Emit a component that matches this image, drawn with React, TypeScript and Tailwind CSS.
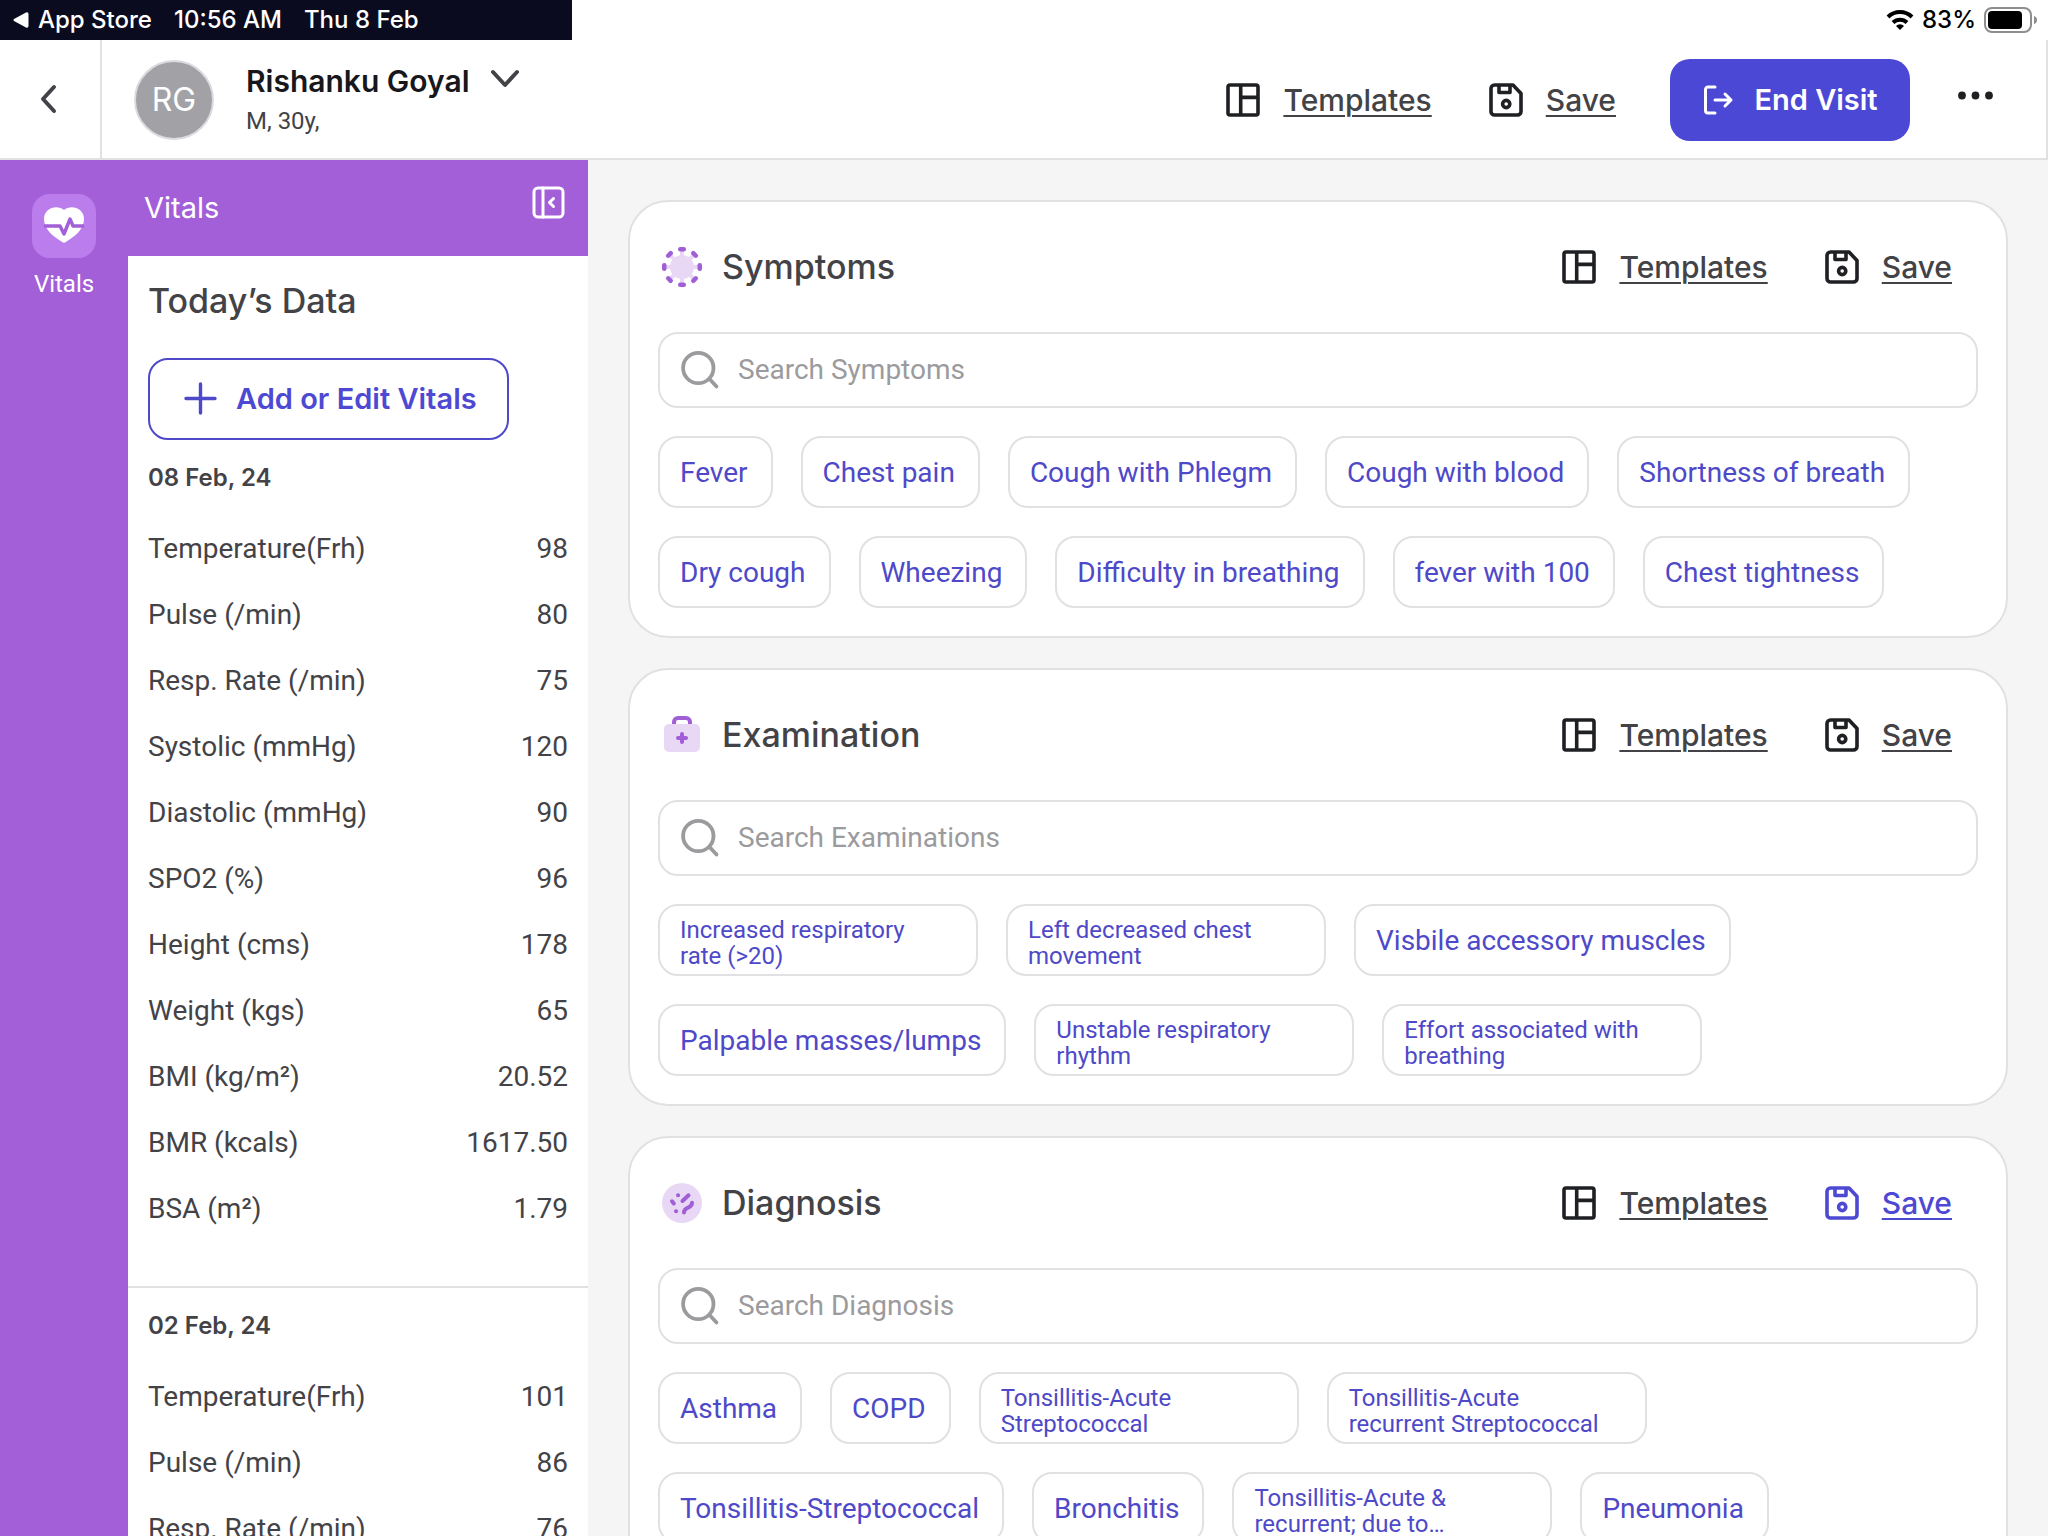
import React from "react";

function TemplatesIcon() {
  return (
    <svg width="40" height="40" viewBox="0 0 40 40" fill="none" stroke="#1f2023" strokeWidth="3.6" strokeLinejoin="round" aria-hidden="true">
      <rect x="5" y="5" width="30" height="30" rx="2" />
      <path d="M17.700 5v30M17.700 17.400h17.300" />
    </svg>
  );
}

function SaveIcon() {
  return (
    <svg width="40" height="40" viewBox="0 0 40 40" fill="none" stroke="currentColor" strokeWidth="3.6" strokeLinejoin="round" aria-hidden="true">
      <path d="M8.500 5h18.500l8 8.500V31.500a3.500 3.500 0 0 1-3.500 3.500H8.500A3.500 3.500 0 0 1 5 31.500V8.500A3.500 3.500 0 0 1 8.500 5Z" />
      <path d="M13 5v7.500h11V5" />
      <circle cx="20.200" cy="24" r="3.600" />
    </svg>
  );
}

function SearchIcon() {
  return (
    <svg width="40" height="40" viewBox="0 0 40 40" fill="none" stroke="#9b9b9e" strokeWidth="3.8" strokeLinecap="round" aria-hidden="true">
      <circle cx="18.300" cy="18" r="15.200" />
      <path d="M30 29.500l6.500 7" />
    </svg>
  );
}

function SymptomsIcon() {
  const angles = [0, 45, 90, 135, 180, 225, 270, 315];
  return (
    <svg width="48" height="48" viewBox="0 0 48 48" aria-hidden="true">
      <circle cx="24" cy="24" r="12" fill="#e8d8f5" />
      {angles.map((a) => (
        <g key={a} transform={`rotate(${a} 24 24)`}>
          <rect x="22" y="6" width="4" height="8" fill="#e8d8f5" />
          <rect x="20" y="4" width="8" height="4.500" rx="2.200" fill="#a05fd6" />
        </g>
      ))}
    </svg>
  );
}

function ExaminationIcon() {
  return (
    <svg width="48" height="48" viewBox="0 0 48 48" fill="none" aria-hidden="true">
      <path d="M16 15v-4a4 4 0 0 1 4-4h8a4 4 0 0 1 4 4v4" stroke="#a05fd6" strokeWidth="4" />
      <rect x="6" y="13" width="36" height="28" rx="5" fill="#e8d8f5" />
      <path d="M24 23v8M20 27h8" stroke="#a05fd6" strokeWidth="4" strokeLinecap="round" />
    </svg>
  );
}

function DiagnosisIcon() {
  return (
    <svg width="48" height="48" viewBox="0 0 48 48" fill="none" aria-hidden="true">
      <circle cx="24" cy="24" r="20" fill="#e8d8f5" />
      <g stroke="#a05fd6" strokeWidth="4" strokeLinecap="round">
        <path d="M24.500 22l6-5.700" />
        <path d="M14 22.300l1.800 2.200" />
        <path d="M20 16.300h.1M18 32.300h.1" />
        <path d="M26 33.500c0-7 8-3 8-9.800" />
      </g>
    </svg>
  );
}

function TemplatesAndSave({ active = false }: { active?: boolean }) {
  return (
    <div className="flex items-center gap-[54px] text-[30px] leading-10 font-medium">
      <button className="flex items-center gap-5 text-[#434347]">
        <TemplatesIcon />
        <span className="underline decoration-2 underline-offset-4">Templates</span>
      </button>
      <button className={active ? "flex items-center gap-5 text-[#4e49d2]" : "flex items-center gap-5 text-[#1f2023]"}>
        <SaveIcon />
        <span className={active ? "underline decoration-2 underline-offset-4" : "text-[#434347] underline decoration-2 underline-offset-4"}>Save</span>
      </button>
    </div>
  );
}

type Chip = string | { wrap: string };

function Section({ title, icon, placeholder, rows, active }: { title: string; icon: React.ReactNode; placeholder: string; rows: Chip[][]; active?: boolean }) {
  return (
    <section className="shrink-0 rounded-[40px] border-2 border-[#e1e1e3] bg-white p-7 pt-0 font-[Inter,sans-serif]">
      <div className="flex h-[130px] items-center justify-between pr-[26px]">
        <h2 className="flex items-center gap-4 text-[34px] leading-10 font-medium text-[#434347]">
          {icon}
          {title}
        </h2>
        <TemplatesAndSave active={active} />
      </div>
      <label className="flex h-[76px] items-center gap-[18px] rounded-[20px] border-2 border-[#e1e1e3] px-5">
        <SearchIcon />
        <input
          type="text"
          aria-label={placeholder}
          placeholder={placeholder}
          className="flex-1 bg-transparent font-[Roboto,sans-serif] text-[28px] text-[#434347] outline-none placeholder:text-[#9b9b9e]"
        />
      </label>
      {rows.map((row, i) => (
        <div key={i} className="mt-7 flex gap-7 font-[Roboto,sans-serif] text-[#4e49c8]">
          {row.map((chip) =>
            typeof chip === "string" ? (
              <button key={chip} className="h-[72px] rounded-[20px] border-2 border-[#e1e1e3] pt-0.5 pr-[23px] pl-5 text-[28px] whitespace-nowrap">
                {chip}
              </button>
            ) : (
              <button key={chip.wrap} className="flex h-[72px] w-80 items-center rounded-[20px] border-2 border-[#e1e1e3] px-5 pt-1.5 text-left text-2xl leading-[26px]">
                <span className="whitespace-pre-line">{chip.wrap}</span>
              </button>
            ),
          )}
        </div>
      ))}
    </section>
  );
}

function Readings({ date, rows }: { date: string; rows: [string, string][] }) {
  return (
    <table className="w-full text-[28px]">
      <caption className="pb-5 text-left font-[Inter,sans-serif] text-2xl leading-9 font-semibold text-[#434347]">{date}</caption>
      <tbody>
        {rows.map(([name, value]) => (
          <tr key={name} className="h-[66px]">
            <th scope="row" className="text-left font-normal">{name}</th>
            <td className="text-right">{value}</td>
          </tr>
        ))}
      </tbody>
    </table>
  );
}

const today: [string, string][] = [
  ["Temperature(Frh)", "98"],
  ["Pulse (/min)", "80"],
  ["Resp. Rate (/min)", "75"],
  ["Systolic (mmHg)", "120"],
  ["Diastolic (mmHg)", "90"],
  ["SPO2 (%)", "96"],
  ["Height (cms)", "178"],
  ["Weight (kgs)", "65"],
  ["BMI (kg/m²)", "20.52"],
  ["BMR (kcals)", "1617.50"],
  ["BSA (m²)", "1.79"],
];

const previous: [string, string][] = [
  ["Temperature(Frh)", "101"],
  ["Pulse (/min)", "86"],
  ["Resp. Rate (/min)", "76"],
];

export default function App() {
  return (
    <div className="flex h-screen flex-col overflow-hidden bg-[#f5f5f5] font-[Roboto,sans-serif]">
      <div className="flex h-10 shrink-0 items-center justify-between bg-white pr-2.5 font-[Inter,sans-serif] text-2xl leading-10 font-medium">
        <div className="flex h-10 w-[572px] items-center bg-[#0b0b20] pl-3 text-white">
          <svg width="18" height="18" viewBox="0 0 18 18" fill="#fff" aria-hidden="true">
            <path d="M2 8 14 1.500Q16.500.8 16.500 3v12q0 2.200-2.500 1.500L2 10Q.8 9 2 8Z" />
          </svg>
          <span className="ml-2">App Store</span>
          <span className="ml-[22px]">10:56 AM</span>
          <span className="ml-[22px]">Thu 8 Feb</span>
        </div>
        <div className="flex items-center text-black">
          <svg width="28" height="24" viewBox="0 0 28 24" fill="none" stroke="#000" strokeWidth="4" aria-hidden="true">
            <path d="M2 9a17 17 0 0 1 24 0M7 14.500a10 10 0 0 1 14 0" />
            <path d="M14 22l-4-4a5.500 5.500 0 0 1 8 0Z" fill="#000" stroke="none" />
          </svg>
          <span className="mx-2">83%</span>
          <svg width="54" height="26" viewBox="0 0 54 26" aria-hidden="true">
            <rect x="1" y="1" width="46" height="24" rx="7" fill="none" stroke="#8e8e8e" strokeWidth="2" />
            <rect x="4" y="4" width="34" height="18" rx="4" />
            <path d="M50 9q3 1 3 4t-3 4Z" fill="#8e8e8e" />
          </svg>
        </div>
      </div>

      <header className="flex h-[120px] shrink-0 items-center border-r-2 border-b-2 border-[#e1e1e3] bg-white font-[Inter,sans-serif]">
        <button aria-label="Back" className="flex h-full w-[102px] items-center justify-center border-r-2 border-[#e1e1e3]">
          <svg width="32" height="32" viewBox="0 0 32 32" fill="none" stroke="#434347" strokeWidth="4" strokeLinecap="round" strokeLinejoin="round" aria-hidden="true">
            <path d="M20 4 9 16 20 28" />
          </svg>
        </button>
        <div className="flex flex-1 items-center pt-0.5">
          <div className="ml-8 flex size-20 items-center justify-center rounded-full border-2 border-[#dcdce0] bg-[#a1a1a6] text-[32px] text-white">RG</div>
          <div className="ml-8 flex-1 pt-0.5">
            <button className="flex items-center gap-5 text-[30px] leading-10 font-semibold text-[#17171c]">
              Rishanku Goyal
              <svg width="30" height="24" viewBox="0 0 30 24" fill="none" stroke="#434347" strokeWidth="4" strokeLinecap="round" strokeLinejoin="round" aria-hidden="true">
                <path d="M3 3l12 13L27 3" />
              </svg>
            </button>
            <div className="font-[Roboto,sans-serif] text-2xl leading-10 text-[#434347]">M, 30y,</div>
          </div>
          <TemplatesAndSave />
          <button className="ml-[54px] flex h-[82px] w-60 items-center justify-center gap-5 rounded-[20px] bg-[#4b48d6] text-[29px] font-semibold text-white">
            <svg width="32" height="32" viewBox="0 0 32 32" fill="none" stroke="#fff" strokeWidth="3" strokeLinecap="round" strokeLinejoin="round" aria-hidden="true">
              <path d="M13 3H6a2.500 2.500 0 0 0-2.500 2.500v21A2.500 2.500 0 0 0 6 29h7M13 16h16M23 10l6 6-6 6" />
            </svg>
            End Visit
          </button>
          <button aria-label="More options" className="mr-[52px] ml-12">
            <svg width="36" height="18" viewBox="0 0 36 18" fill="#1f2023" aria-hidden="true">
              <circle cx="4" cy="4.500" r="3.900" />
              <circle cx="17.500" cy="4.500" r="3.900" />
              <circle cx="31" cy="4.500" r="3.900" />
            </svg>
          </button>
        </div>
      </header>

      <div className="flex min-h-0 flex-1">
        <nav className="w-32 shrink-0 bg-[#a35fd8] pt-[34px]">
          <button className="flex w-full flex-col items-center gap-2 text-2xl leading-9 text-white">
            <span className="flex size-16 items-center justify-center rounded-[18px] bg-[#bb7dec]">
              <svg width="44" height="40" viewBox="0 0 44 40" aria-hidden="true">
                <path d="M22 37C12 31 2 24 2 13 2 2 15-2 22 4c7-6 20-2 20 9 0 11-10 18-20 24Z" fill="#fff" />
                <path d="M2 20h16l4 8 6-15 3 7h11" fill="none" stroke="#a35fd8" strokeWidth="3.4" strokeLinejoin="round" />
              </svg>
            </span>
            Vitals
          </button>
        </nav>
        <aside className="flex w-[460px] shrink-0 flex-col bg-white text-[#434347]">
          <div className="flex h-24 shrink-0 items-center justify-between bg-[#a35fd8] pr-[21px] pl-4 font-[Inter,sans-serif] text-[29px] text-white">
            Vitals
            <button aria-label="Collapse panel" className="mb-2.5">
              <svg width="36" height="36" viewBox="0 0 36 36" fill="none" stroke="#fff" strokeWidth="3" strokeLinecap="round" strokeLinejoin="round" aria-hidden="true">
                <rect x="3" y="3" width="29" height="29" rx="4" />
                <path d="M12 3v29M22.500 13.500l-4 4 4 4" />
              </svg>
            </button>
          </div>
          <div className="flex flex-col items-start px-5 pt-5">
            <h1 className="font-[Inter,sans-serif] text-[34px] leading-[50px] font-medium">Today’s Data</h1>
            <button className="mt-8 flex h-[82px] items-center gap-4 rounded-[20px] border-2 border-[#4e49c8] px-[30px] font-[Inter,sans-serif] text-[29px] font-semibold text-[#4e49d2]">
              <svg width="40" height="40" viewBox="0 0 40 40" fill="none" stroke="#4e49c8" strokeWidth="3.4" strokeLinecap="round" aria-hidden="true">
                <path d="M20.500 5v29M6 19.500h29" />
              </svg>
              Add or Edit Vitals
            </button>
            <div className="mt-5 w-full">
              <Readings date="08 Feb, 24" rows={today} />
            </div>
          </div>
          <div className="mt-11 border-t-2 border-[#e1e1e3] px-5 pt-5">
            <Readings date="02 Feb, 24" rows={previous} />
          </div>
        </aside>
        <main className="flex min-w-0 flex-1 flex-col gap-[30px] p-10">
          <Section
            title="Symptoms"
            icon={<SymptomsIcon />}
            placeholder="Search Symptoms"
            rows={[
              ["Fever", "Chest pain", "Cough with Phlegm", "Cough with blood", "Shortness of breath"],
              ["Dry cough", "Wheezing", "Difficulty in breathing", "fever with 100", "Chest tightness"],
            ]}
          />
          <Section
            title="Examination"
            icon={<ExaminationIcon />}
            placeholder="Search Examinations"
            rows={[
              [{ wrap: "Increased respiratory\nrate (>20)" }, { wrap: "Left decreased chest\nmovement" }, "Visbile accessory muscles"],
              ["Palpable masses/lumps", { wrap: "Unstable respiratory\nrhythm" }, { wrap: "Effort associated with\nbreathing" }],
            ]}
          />
          <Section
            title="Diagnosis"
            icon={<DiagnosisIcon />}
            placeholder="Search Diagnosis"
            active
            rows={[
              ["Asthma", "COPD", { wrap: "Tonsillitis-Acute\nStreptococcal" }, { wrap: "Tonsillitis-Acute\nrecurrent Streptococcal" }],
              ["Tonsillitis-Streptococcal", "Bronchitis", { wrap: "Tonsillitis-Acute &\nrecurrent; due to…" }, "Pneumonia"],
            ]}
          />
        </main>
      </div>
    </div>
  );
}
